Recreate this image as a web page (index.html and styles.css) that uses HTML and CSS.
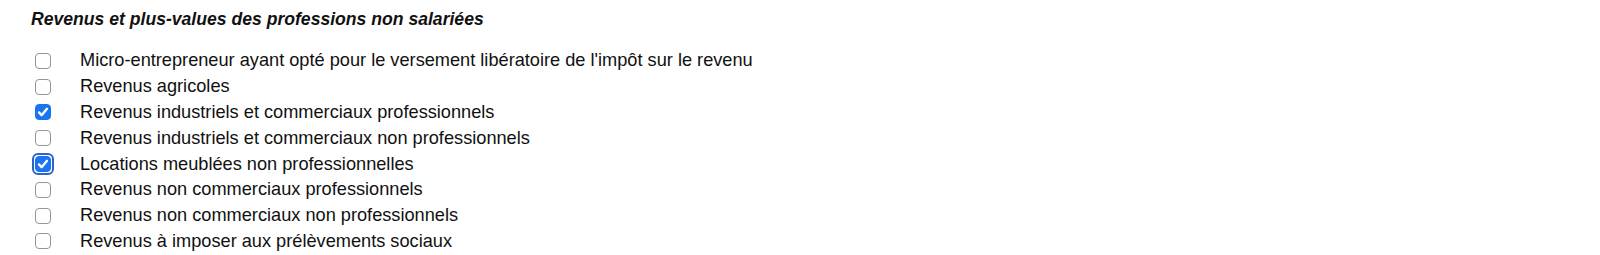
FILE: index.html
```html
<!DOCTYPE html>
<html lang="fr">
<head>
    <meta charset="UTF-8">
    <title>Revenus et plus-values des professions non salariées</title>
    <link rel="stylesheet" href="styles.css">
</head>
<body>
    <div class="section">
        <h3 class="section-title">Revenus et plus-values des professions non salariées</h3>
        <ul class="options">
            <li class="option"><span class="box"></span><span class="label">Micro-entrepreneur ayant opté pour le versement libératoire de l'impôt sur le revenu</span></li>
            <li class="option"><span class="box"></span><span class="label">Revenus agricoles</span></li>
            <li class="option"><span class="box checked"><svg viewBox="0 0 16 16"><path d="M4 8.4l2.6 2.8L12 4.8"/></svg></span><span class="label">Revenus industriels et commerciaux professionnels</span></li>
            <li class="option"><span class="box"></span><span class="label">Revenus industriels et commerciaux non professionnels</span></li>
            <li class="option"><span class="box checked focused"><svg viewBox="0 0 16 16"><path d="M4 8.4l2.6 2.8L12 4.8"/></svg></span><span class="label">Locations meublées non professionnelles</span></li>
            <li class="option"><span class="box"></span><span class="label">Revenus non commerciaux professionnels</span></li>
            <li class="option"><span class="box"></span><span class="label">Revenus non commerciaux non professionnels</span></li>
            <li class="option"><span class="box"></span><span class="label">Revenus à imposer aux prélèvements sociaux</span></li>
        </ul>
    </div>
</body>
</html>
```

FILE: styles.css
```css
body {
    margin: 0;
    background: #fff;
    font-family: "Liberation Sans", Arial, sans-serif;
    color: #111;
}
.section {
    padding: 9px 0 0 31px;
}
.section-title {
    margin: 0 0 19px;
    font-size: 17.6px;
    font-weight: bold;
    font-style: italic;
    line-height: 20px;
}
.options {
    list-style: none;
    margin: 0;
    padding: 0 0 0 4px;
}
.option {
    display: flex;
    align-items: center;
    height: 25.8px;
}
.box {
    position: relative;
    box-sizing: border-box;
    width: 16px;
    height: 16px;
    border: 1px solid #959595;
    border-radius: 4px;
    background: #fff;
    flex-shrink: 0;
}
.box.checked {
    background: #1a73f0;
    border-color: #1a73f0;
}
.box.focused::after {
    content: "";
    position: absolute;
    inset: -4px;
    border: 2.5px solid #2c64c8;
    border-radius: 6px;
}
.box svg {
    position: absolute;
    left: -1px;
    top: -1px;
    width: 16px;
    height: 16px;
    fill: none;
    stroke: #fff;
    stroke-width: 2.4;
    stroke-linecap: round;
    stroke-linejoin: round;
}
.label {
    margin-left: 29px;
    font-size: 18.2px;
}
```
